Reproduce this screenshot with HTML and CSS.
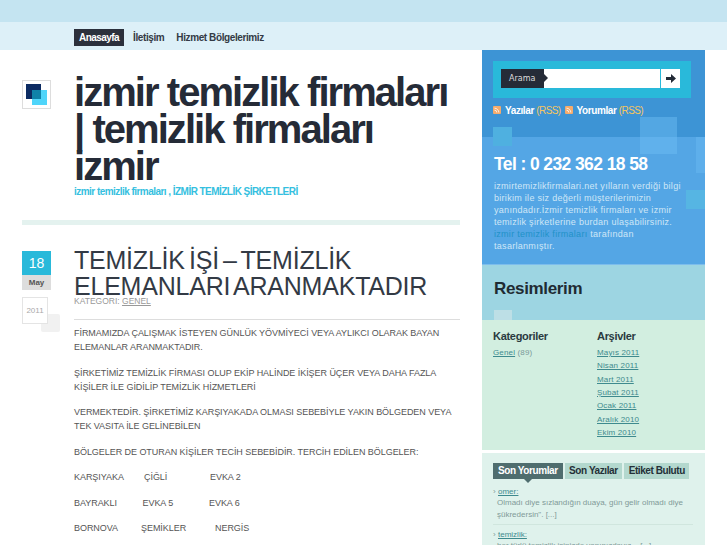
FILE: index.html
```html
<!DOCTYPE html>
<html>
<head>
  <title>izmir temizlik firmaları</title>
  <link rel="stylesheet" href="styles.css">
</head>
<body>
  <div class="topband"></div>
  <nav class="nav">
    <a class="nav-item active" href="#">Anasayfa</a>
    <a class="nav-item" href="#">İletişim</a>
    <a class="nav-item" href="#">Hizmet Bölgelerimiz</a>
  </nav>
  <div class="page">
    <div class="main">
      <header class="site-head">
        <div class="logo">
          <svg width="29" height="29" viewBox="0 0 29 29">
            <rect x="0.5" y="0.5" width="28" height="28" fill="#fff" stroke="#ddd"/>
            <rect x="4" y="4" width="15" height="15" fill="#0c2b62"/>
            <rect x="10" y="10" width="15" height="15" fill="#4fd5fa"/>
            <rect x="10" y="10" width="9" height="9" fill="#0f82a8"/>
          </svg>
        </div>
        <div class="site-title">
          <h1>izmir temizlik firmaları | temizlik firmaları izmir</h1>
          <p class="tagline">izmir temizlik firmaları , İZMİR TEMİZLİK ŞİRKETLERİ</p>
        </div>
      </header>
      <div class="rule"></div>
      <article class="post">
        <div class="date">
          <div class="day">18</div>
          <div class="month">May</div>
          <div class="year">2011</div>
          <div class="year-tab"></div>
        </div>
        <div class="post-body">
          <h2>TEMİZLİK İŞİ – TEMİZLİK ELEMANLARI ARANMAKTADIR</h2>
          <div class="meta">KATEGORI: <a href="#">GENEL</a></div>
          <div class="text">
            <p>FİRMAMIZDA ÇALIŞMAK İSTEYEN GÜNLÜK YÖVMİYECİ VEYA AYLIKCI OLARAK BAYAN ELEMANLAR ARANMAKTADIR.</p>
            <p>ŞİRKETİMİZ TEMİZLİK FİRMASI OLUP EKİP HALİNDE İKİŞER ÜÇER VEYA DAHA FAZLA KİŞİLER İLE GİDİLİP TEMİZLİK HİZMETLERİ</p>
            <p>VERMEKTEDİR. ŞİRKETİMİZ KARŞIYAKADA OLMASI SEBEBİYLE YAKIN BÖLGEDEN VEYA TEK VASITA İLE GELİNEBİLEN</p>
            <p>BÖLGELER DE OTURAN KİŞİLER TECİH SEBEBİDİR. TERCİH EDİLEN BÖLGELER:</p>
            <p class="areas"><span class="a1">KARŞIYAKA</span><span class="a2">ÇİĞLİ</span><span>EVKA 2</span></p>
            <p class="areas"><span class="b1">BAYRAKLI</span><span class="b2">EVKA 5</span><span>EVKA 6</span></p>
            <p class="areas"><span class="c1">BORNOVA</span><span class="c2">ŞEMİKLER</span><span>NERGİS</span></p>
          </div>
        </div>
      </article>
    </div>

    <aside class="side">
      <div class="side-top">
        <i class="sq sq1"></i><i class="sq sq2"></i><i class="sq sq3"></i><i class="sq sq4"></i><i class="sq sq5"></i>
        <div class="search">
          <span class="search-label">Arama</span>
          <span class="search-input"></span>
          <span class="search-btn">
            <svg width="10" height="9" viewBox="0 0 10 9"><path d="M0 3h5V0l5 4.5L5 9V6H0z" fill="#222a36"/></svg>
          </span>
        </div>
        <div class="feeds">
          <svg class="rss" width="8" height="8" viewBox="0 0 8 8"><rect width="8" height="8" rx="1" fill="#f5ab6c"/><path d="M1.5 2.2a4.3 4.3 0 0 1 4.3 4.3M1.5 4.2a2.3 2.3 0 0 1 2.3 2.3" fill="none" stroke="#fff" stroke-width=".8"/></svg>
          <span class="feed">Yazılar <b>(RSS)</b></span>
          <svg class="rss" width="8" height="8" viewBox="0 0 8 8"><rect width="8" height="8" rx="1" fill="#f5ab6c"/><path d="M1.5 2.2a4.3 4.3 0 0 1 4.3 4.3M1.5 4.2a2.3 2.3 0 0 1 2.3 2.3" fill="none" stroke="#fff" stroke-width=".8"/></svg>
          <span class="feed">Yorumlar <b>(RSS)</b></span>
        </div>
        <div class="about">
          <h3>Tel : 0 232 362 18 58</h3>
          <p>izmirtemizlikfirmalari.net yılların verdiği bilgi birikim ile siz değerli müşterilerimizin yanındadır.İzmir temizlik firmaları ve izmir temizlik şirketlerine burdan ulaşabilirsiniz. <a href="#">izmir temizlik firmaları</a> tarafından tasarlanmıştır.</p>
        </div>
      </div>
      <div class="side-photos">
        <h3>Resimlerim</h3>
        <i class="sq sq6"></i>
      </div>
      <div class="side-lists">
        <div class="list-col cats">
          <h4>Kategoriler</h4>
          <div class="row"><a href="#">Genel</a> (89)</div>
        </div>
        <div class="list-col">
          <h4>Arşivler</h4>
          <div class="row"><a href="#">Mayıs 2011</a></div>
          <div class="row"><a href="#">Nisan 2011</a></div>
          <div class="row"><a href="#">Mart 2011</a></div>
          <div class="row"><a href="#">Şubat 2011</a></div>
          <div class="row"><a href="#">Ocak 2011</a></div>
          <div class="row"><a href="#">Aralık 2010</a></div>
          <div class="row"><a href="#">Ekim 2010</a></div>
        </div>
      </div>
      <div class="side-tabs">
        <div class="tabs">
          <span class="tab on">Son Yorumlar</span>
          <span class="tab">Son Yazılar</span>
          <span class="tab">Etiket Bulutu</span>
        </div>
        <div class="comment">
          <div class="who"><span class="mark">›</span><a href="#">omer:</a></div>
          <p>Olmadı diye sızlandığın duaya, gün gelir olmadı diye şükredersin". [...]</p>
        </div>
        <div class="comment">
          <div class="who"><span class="mark">›</span><a href="#">temizlik:</a></div>
          <p>her türlü temizlik işinizde yanınızdayız... [...]</p>
        </div>
      </div>
    </aside>
  </div>
</body>
</html>
```

FILE: styles.css
```css
html, body {
  margin: 0;
  height: 545px;
  overflow: hidden;
}
body {
  background: #fff;
  font-family: "Liberation Sans", Arial, sans-serif;
  color: #555;
}
a {
  color: inherit;
}
.topband {
  height: 22px;
  background: #c4e4f1;
}
.nav {
  height: 28px;
  background: #ddf0f8;
  display: flex;
  align-items: center;
  padding-left: 74px;
  padding-top: 3px;
  box-sizing: border-box;
}
.nav-item {
  font-size: 10px;
  font-weight: bold;
  letter-spacing: -0.4px;
  color: #333a45;
  text-decoration: none;
  margin-right: 12px;
  line-height: 17px;
}
.nav-item.active {
  background: #2b303c;
  color: #fff;
  padding: 0 5px;
  margin-right: 9px;
  letter-spacing: -0.55px;
}
.page {
  display: flex;
  align-items: flex-start;
  padding-left: 22px;
  gap: 22px;
}
.main {
  width: 438px;
}
.site-head {
  display: flex;
  padding-top: 24px;
  gap: 23px;
}
.logo {
  padding-top: 6px;
  height: 29px;
}
.logo svg {
  display: block;
}
h1 {
  margin: 0;
  width: 385px;
  font-size: 40px;
  line-height: 37px;
  font-weight: bold;
  letter-spacing: -1.95px;
  color: #252b37;
}
.tagline {
  margin: 0;
  font-size: 10px;
  line-height: 14px;
  font-weight: bold;
  letter-spacing: -0.54px;
  color: #35bfe0;
}
.rule {
  height: 5px;
  background: #e4f2ef;
  margin-top: 21px;
}
.post {
  display: flex;
  gap: 23px;
  margin-top: 22px;
}
.date {
  width: 29px;
  position: relative;
  flex: none;
  padding-top: 4px;
}
.day {
  height: 24px;
  background: #29b9da;
  color: #fff;
  font-size: 14px;
  line-height: 24px;
  text-align: center;
}
.month {
  height: 15px;
  background: #ddd;
  font-size: 8px;
  font-weight: bold;
  line-height: 15px;
  text-align: center;
  color: #555;
}
.year {
  width: 26px;
  height: 27px;
  margin-top: 7px;
  border: 1px solid #e4e4e4;
  box-sizing: border-box;
  background: #fff;
  font-size: 8px;
  line-height: 25px;
  text-align: center;
  color: #aaa;
  position: relative;
  z-index: 1;
}
.year-tab {
  position: absolute;
  left: 19px;
  top: 67px;
  width: 19px;
  height: 18px;
  background: #f1f1f1;
  border-radius: 2px;
}
.post-body {
  flex: 1;
  min-width: 0;
}
h2 {
  margin: 0;
  font-size: 25px;
  line-height: 26px;
  font-weight: normal;
  letter-spacing: -0.22px;
  word-spacing: -2.5px;
  color: #333a45;
}
.meta {
  font-size: 8.5px;
  line-height: 11px;
  color: #999;
  margin-top: -3px;
  padding-bottom: 12px;
  border-bottom: 1px solid #ddd;
}
.text {
  padding-top: 6px;
}
.text p {
  margin: 0 0 11.5px;
  font-size: 9px;
  letter-spacing: -0.05px;
  line-height: 14px;
  color: #555;
}
.areas span {
  display: inline-block;
}
.a1 { width: 70px; }
.a2 { width: 66px; }
.b1 { width: 68.5px; }
.b2 { width: 66.5px; }
.c1 { width: 67px; }
.c2 { width: 74px; }

.side {
  width: 223px;
  flex: none;
}
.side-top {
  position: relative;
  height: 215px;
  box-sizing: border-box;
  padding: 11px 14px 0 11px;
  background: linear-gradient(#3d94d5 87px, #54a6e5 87px);
}
.sq {
  position: absolute;
  display: block;
}
.sq1 { left: 11px; top: 77px; width: 19px; height: 19px; background: #4fb0e0; }
.sq2 { left: 158px; top: 67px; width: 37px; height: 37px; background: rgba(110, 190, 245, 0.45); }
.sq3 { left: 214px; top: 87px; width: 9px; height: 36px; background: rgba(110, 190, 245, 0.4); }
.sq4 { left: 204px; top: 140px; width: 19px; height: 19px; background: #56b5e3; }
.sq5 { left: 0; top: 214px; width: 223px; height: 1px; background: #7dbdec; }
.sq6 { left: 12px; bottom: 0; width: 18px; height: 10px; background: #bddfe6; }
.search {
  position: relative;
  display: flex;
  align-items: stretch;
  height: 37px;
  width: 198px;
  box-sizing: border-box;
  padding: 8px 11px 10px 8px;
  background: #29b9da;
}
.search-label {
  width: 43px;
  background: #252b37;
  color: #ddd;
  font-family: "DejaVu Sans", sans-serif;
  font-size: 8px;
  line-height: 19px;
  padding-left: 8px;
  box-sizing: border-box;
  position: relative;
}
.search-label::after {
  content: "";
  position: absolute;
  left: 43px;
  top: 5px;
  border: 4px solid transparent;
  border-left-color: #252b37;
  border-right: 0;
}
.search-input {
  width: 116px;
  background: #fff;
}
.search-btn {
  width: 19px;
  margin-left: 1px;
  background: #fff;
  display: flex;
  align-items: center;
  justify-content: center;
}
.feeds {
  position: relative;
  display: flex;
  align-items: center;
  margin-top: 6px;
  height: 12px;
  font-size: 10px;
  font-weight: bold;
  letter-spacing: -0.4px;
  color: #fff;
}
.rss {
  margin-right: 4px;
}
.feed {
  margin-right: 4px;
}
.feed b {
  font-weight: normal;
  letter-spacing: -0.6px;
  color: #f5c55f;
}
.about {
  position: relative;
  margin-top: 37px;
  padding-left: 1px;
}
.about h3 {
  margin: 0 0 5px;
  font-size: 17.5px;
  line-height: 22px;
  font-weight: bold;
  letter-spacing: -0.6px;
  color: #fff;
}
.about p {
  margin: 0;
  width: 200px;
  font-size: 9px;
  letter-spacing: 0.29px;
  line-height: 12px;
  color: #cfe6f7;
}
.about a {
  color: #1f92c8;
  text-decoration: none;
}
.side-photos {
  position: relative;
  height: 55px;
  background: #9dd5e2;
  padding: 14px 12px 0;
  box-sizing: border-box;
}
.side-photos h3 {
  margin: 0;
  font-size: 17px;
  line-height: 20px;
  letter-spacing: -0.35px;
  color: #1f2b33;
}
.side-lists {
  display: flex;
  height: 130px;
  box-sizing: border-box;
  padding: 10px 11px 0;
  background: #d2eee0;
}
.list-col {
  font-size: 8px;
  letter-spacing: 0.15px;
  color: #7a9a9a;
}
.cats {
  width: 104px;
}
.list-col h4 {
  margin: 0 0 3px;
  font-size: 11px;
  line-height: 13px;
  letter-spacing: -0.3px;
  color: #2a3a3f;
}
.row {
  height: 13.35px;
  line-height: 13px;
}
.row a {
  color: #3e8a8e;
}
.side-tabs {
  margin-top: 3px;
  height: 92px;
  overflow: hidden;
  padding: 10px 11px 0;
  background: #dff2ec;
}
.tabs {
  display: flex;
  gap: 2px;
  font-size: 10px;
  font-weight: bold;
  letter-spacing: -0.42px;
  white-space: nowrap;
}
.tab {
  padding: 0 4.5px;
  line-height: 16px;
  background: #b3d8ce;
  color: #243038;
}
.tab.on {
  position: relative;
  background: #4f6d6e;
  color: #fff;
  padding: 0 5px;
}
.tab.on::after {
  content: "";
  position: absolute;
  left: 31px;
  top: 16px;
  border: 4px solid transparent;
  border-top-color: #4f6d6e;
  border-bottom: 0;
}
.comment {
  padding: 7px 0 3px;
  margin-right: 1px;
  border-bottom: 1px solid #d0e6de;
  font-size: 8px;
  line-height: 12px;
  color: #7f9a98;
}
.comment:last-child {
  padding-top: 4px;
  border-bottom: 0;
}
.comment p {
  margin: 0 0 0 4px;
}
.who {
  line-height: 11px;
}
.mark {
  display: inline-block;
  width: 5px;
}
.who a {
  color: #3e8a8e;
}
```
